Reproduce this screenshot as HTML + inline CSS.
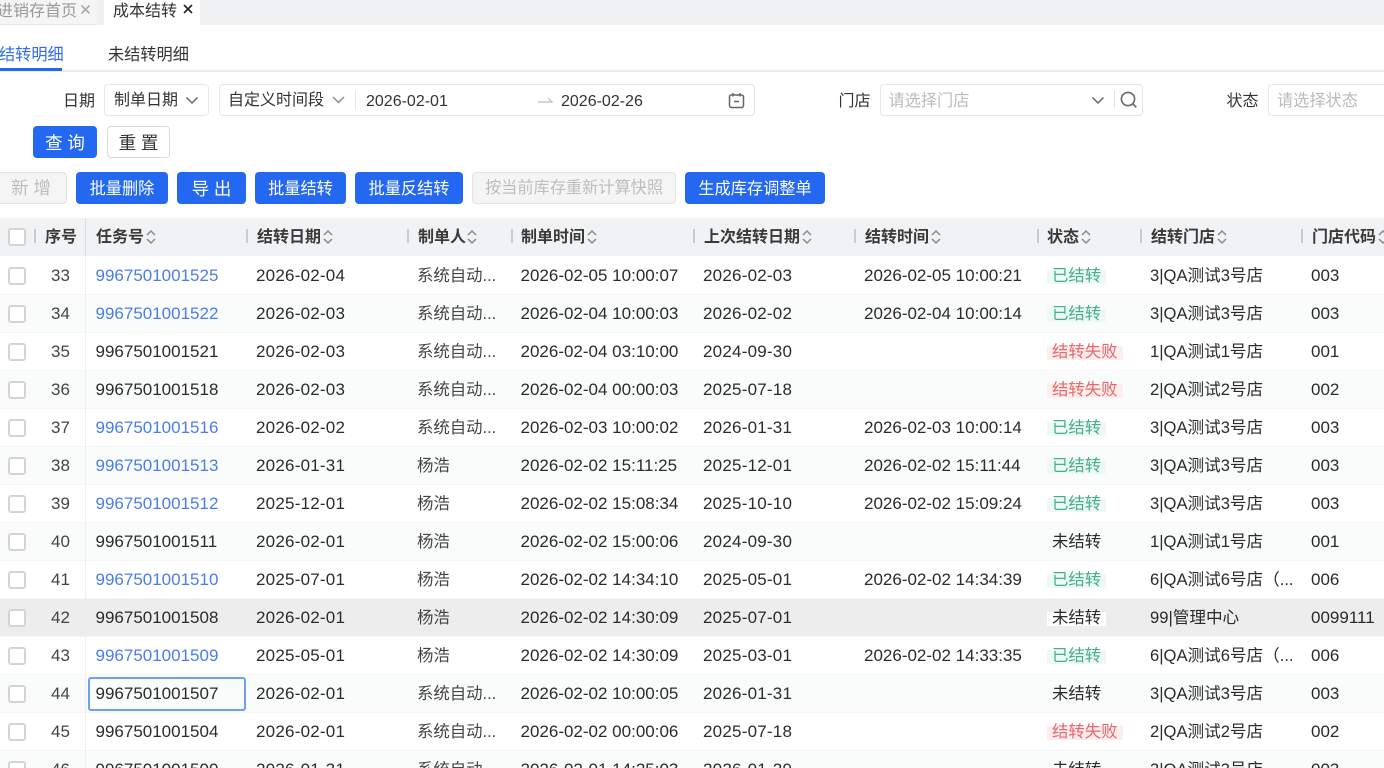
<!DOCTYPE html>
<html lang="zh"><head><meta charset="utf-8"><title>成本结转</title>
<style>
*{box-sizing:border-box}
html,body{margin:0;padding:0;width:1384px;height:768px;overflow:hidden;background:#fff}
body{position:relative;font-family:"Liberation Sans","Noto Sans CJK SC",sans-serif;color:#333;font-size:16px}
.a{position:absolute;white-space:nowrap}
.box{position:absolute;border:1.5px solid #e6e7e9;border-radius:4px;background:#fff;height:32px}
.t{position:absolute;white-space:nowrap;line-height:24px}
.btn{position:absolute;height:32px;border-radius:4px;background:#2468f2;color:#fff;text-align:center;line-height:34px;font-size:16.2px;white-space:nowrap}
.sp{font-size:17.5px}
.dis{background:#f5f5f5;border:1.5px solid #e4e4e4;color:#bdbdbd;line-height:31px}
.ph{color:#bbb}
.hd{position:absolute;left:0;top:218px;width:1384px;height:38px;background:#f1f2f4}
.hd b{position:absolute;top:8px;line-height:24px;font-weight:700;color:#3a3a3a;font-size:16px;white-space:nowrap}
.hd i{position:absolute;top:11px;width:1.5px;height:14px;background:#c9ccd1}
.hd svg{position:absolute;top:10px}
.r{position:absolute;left:0;width:1384px;height:38px;background:#fff;border-bottom:1px solid #f4f5f6}
.r.e{background:#fafbfb}
.r.h{background:#ededed}
.r>span{position:absolute;top:6px;line-height:25px;font-size:17px;white-space:nowrap;color:#2b2b2b}
.r>span:nth-child(1){left:7.5px;top:10px;width:18px;height:18px;border:2px solid #d4d4d4;border-radius:3px;background:#fff}
.r>span:nth-child(2){left:35.5px;width:50px;text-align:center;color:#444}
.r>span:nth-child(3){left:95.5px}
.r>span:nth-child(4){left:256px;letter-spacing:.22px}
.r>span:nth-child(5){left:417px;top:7px;color:#444;font-size:16.4px}
.r>span:nth-child(6){left:520.5px}
.r>span:nth-child(7){left:703px;letter-spacing:.22px}
.r>span:nth-child(8){left:864px}
.r>span:nth-child(9){left:1047px;top:7px;padding:0 5px;font-size:16.4px;background:linear-gradient(transparent 6px,var(--b,transparent) 6px,var(--b,transparent) 20px,transparent 20px)}
.r>span:nth-child(10){left:1150px;font-size:16.6px}
.r>span:nth-child(11){left:1311px}
.l{color:#4a7cf0 !important}
.g{color:#43b08a !important;--b:#eef9f5}
.f{color:#e8676a !important;--b:#fdeded}
.w{--b:#fff}
</style></head><body>

<div class="a" style="left:0;top:0;width:1384px;height:25px;background:#f0f1f3"></div>
<div class="a" style="left:0;top:0;width:97px;height:25px;background:#f5f5f5;border-bottom:1px solid #e8e8e8"></div>
<div class="a" style="left:104px;top:0;width:96px;height:25px;background:#fff"></div>
<div class="t" style="left:-3px;top:0;color:#9a9a9a;font-size:16px">进销存首页</div>
<svg class="a" style="left:80px;top:4px" width="11" height="11" viewBox="0 0 11 11"><path d="M1.5 1.5l8 8M9.5 1.5l-8 8" stroke="#aaa" stroke-width="1.6"/></svg>
<div class="t" style="left:113px;top:0;color:#333;font-size:16px">成本结转</div>
<svg class="a" style="left:183px;top:4px" width="10" height="10" viewBox="0 0 10 10"><path d="M1 1l8 8M9 1l-8 8" stroke="#222" stroke-width="1.6"/></svg>

<div class="t" style="left:-1px;top:43px;color:#2f6cf2;font-size:16.2px">结转明细</div>
<div class="t" style="left:108px;top:43px;color:#333;font-size:16.2px">未结转明细</div>
<div class="a" style="left:0;top:70px;width:1384px;height:1.5px;background:#ececec"></div>
<div class="a" style="left:0;top:68px;width:62px;height:2.5px;background:#2468f2"></div>

<div class="t" style="left:63px;top:90px">日期</div>
<div class="box" style="left:104px;top:84px;width:105px"></div>
<div class="t" style="left:114px;top:89px">制单日期</div>
<svg class="a" style="left:185px;top:96px" width="14" height="9" viewBox="0 0 14 9"><path d="M1.5 1.5L7 7l5.5-5.5" fill="none" stroke="#666" stroke-width="1.5"/></svg>
<div class="box" style="left:219px;top:84px;width:536px"></div>
<div class="t" style="left:228px;top:89px">自定义时间段</div>
<svg class="a" style="left:332px;top:96px" width="13" height="8" viewBox="0 0 13 8"><path d="M1 1l5.5 5.5L12 1" fill="none" stroke="#888" stroke-width="1.4"/></svg>
<div class="a" style="left:355px;top:91px;width:1px;height:18px;background:#e4e4e4"></div>
<div class="t" style="left:366px;top:90px;font-size:16px;color:#333">2026-02-01</div>
<svg class="a" style="left:538px;top:96px" width="16" height="10" viewBox="0 0 16 10"><path d="M0 6h14L10 2" fill="none" stroke="#bbb" stroke-width="1.2"/></svg>
<div class="t" style="left:561px;top:90px;font-size:16px;color:#333">2026-02-26</div>
<svg class="a" style="left:728px;top:92px" width="17" height="17" viewBox="0 0 17 17"><rect x="1.5" y="3" width="14" height="12.5" rx="2" fill="none" stroke="#666" stroke-width="1.5"/><path d="M5 1v3.5M12 1v3.5M6 9.5h5" stroke="#666" stroke-width="1.5" fill="none"/></svg>

<div class="t" style="left:838.5px;top:90px">门店</div>
<div class="box" style="left:879.5px;top:84px;width:263.5px"></div>
<div class="t ph" style="left:888.5px;top:89px;font-size:16.2px">请选择门店</div>
<svg class="a" style="left:1091px;top:96px" width="14" height="9" viewBox="0 0 14 9"><path d="M1.5 1.5L7 7l5.5-5.5" fill="none" stroke="#666" stroke-width="1.5"/></svg>
<div class="a" style="left:1114px;top:90px;width:1px;height:18px;background:#e2e2e2"></div>
<svg class="a" style="left:1119px;top:90px" width="19" height="19" viewBox="0 0 19 19"><circle cx="9" cy="9" r="6.6" fill="none" stroke="#666" stroke-width="1.6"/><path d="M13.8 13.8l3.5 3.5" stroke="#666" stroke-width="1.6"/></svg>

<div class="t" style="left:1226.5px;top:90px">状态</div>
<div class="box" style="left:1267.5px;top:84px;width:130px"></div>
<div class="t ph" style="left:1277px;top:89px;font-size:16.2px">请选择状态</div>

<div class="btn sp" style="left:33px;top:126px;width:64px">查 询</div>
<div class="btn sp" style="left:107px;top:126px;width:63px;background:#fff;border:1.5px solid #d9d9d9;color:#333;line-height:32px">重 置</div>

<div class="btn dis sp" style="left:-5px;top:172px;width:72px">新 增</div>
<div class="btn" style="left:76px;top:172px;width:92px">批量删除</div>
<div class="btn sp" style="left:177px;top:172px;width:69px">导 出</div>
<div class="btn" style="left:255px;top:172px;width:91px">批量结转</div>
<div class="btn" style="left:355px;top:172px;width:108px">批量反结转</div>
<div class="btn dis" style="left:472px;top:172px;width:204px">按当前库存重新计算快照</div>
<div class="btn" style="left:685px;top:172px;width:140px">生成库存调整单</div>

<div class="r" style="top:257px"><span></span><span>33</span><span class="l">9967501001525</span><span>2026-02-04</span><span>系统自动...</span><span>2026-02-05 10:00:07</span><span>2026-02-03</span><span>2026-02-05 10:00:21</span><span class="g">已结转</span><span>3|QA测试3号店</span><span>003</span></div>
<div class="r e" style="top:295px"><span></span><span>34</span><span class="l">9967501001522</span><span>2026-02-03</span><span>系统自动...</span><span>2026-02-04 10:00:03</span><span>2026-02-02</span><span>2026-02-04 10:00:14</span><span class="g">已结转</span><span>3|QA测试3号店</span><span>003</span></div>
<div class="r" style="top:333px"><span></span><span>35</span><span>9967501001521</span><span>2026-02-03</span><span>系统自动...</span><span>2026-02-04 03:10:00</span><span>2024-09-30</span><span></span><span class="f">结转失败</span><span>1|QA测试1号店</span><span>001</span></div>
<div class="r e" style="top:371px"><span></span><span>36</span><span>9967501001518</span><span>2026-02-03</span><span>系统自动...</span><span>2026-02-04 00:00:03</span><span>2025-07-18</span><span></span><span class="f">结转失败</span><span>2|QA测试2号店</span><span>002</span></div>
<div class="r" style="top:409px"><span></span><span>37</span><span class="l">9967501001516</span><span>2026-02-02</span><span>系统自动...</span><span>2026-02-03 10:00:02</span><span>2026-01-31</span><span>2026-02-03 10:00:14</span><span class="g">已结转</span><span>3|QA测试3号店</span><span>003</span></div>
<div class="r e" style="top:447px"><span></span><span>38</span><span class="l">9967501001513</span><span>2026-01-31</span><span>杨浩</span><span>2026-02-02 15:11:25</span><span>2025-12-01</span><span>2026-02-02 15:11:44</span><span class="g">已结转</span><span>3|QA测试3号店</span><span>003</span></div>
<div class="r" style="top:485px"><span></span><span>39</span><span class="l">9967501001512</span><span>2025-12-01</span><span>杨浩</span><span>2026-02-02 15:08:34</span><span>2025-10-10</span><span>2026-02-02 15:09:24</span><span class="g">已结转</span><span>3|QA测试3号店</span><span>003</span></div>
<div class="r e" style="top:523px"><span></span><span>40</span><span>9967501001511</span><span>2026-02-01</span><span>杨浩</span><span>2026-02-02 15:00:06</span><span>2024-09-30</span><span></span><span>未结转</span><span>1|QA测试1号店</span><span>001</span></div>
<div class="r" style="top:561px"><span></span><span>41</span><span class="l">9967501001510</span><span>2025-07-01</span><span>杨浩</span><span>2026-02-02 14:34:10</span><span>2025-05-01</span><span>2026-02-02 14:34:39</span><span class="g">已结转</span><span>6|QA测试6号店（...</span><span>006</span></div>
<div class="r h" style="top:599px"><span></span><span>42</span><span>9967501001508</span><span>2026-02-01</span><span>杨浩</span><span>2026-02-02 14:30:09</span><span>2025-07-01</span><span></span><span class="w">未结转</span><span>99|管理中心</span><span>0099111</span></div>
<div class="r" style="top:637px"><span></span><span>43</span><span class="l">9967501001509</span><span>2025-05-01</span><span>杨浩</span><span>2026-02-02 14:30:09</span><span>2025-03-01</span><span>2026-02-02 14:33:35</span><span class="g">已结转</span><span>6|QA测试6号店（...</span><span>006</span></div>
<div class="r e" style="top:675px"><span></span><span>44</span><span>9967501001507</span><span>2026-02-01</span><span>系统自动...</span><span>2026-02-02 10:00:05</span><span>2026-01-31</span><span></span><span>未结转</span><span>3|QA测试3号店</span><span>003</span></div>
<div class="r" style="top:713px"><span></span><span>45</span><span>9967501001504</span><span>2026-02-01</span><span>系统自动...</span><span>2026-02-02 00:00:06</span><span>2025-07-18</span><span></span><span class="f">结转失败</span><span>2|QA测试2号店</span><span>002</span></div>
<div class="r e" style="top:751px"><span></span><span>46</span><span>9967501001500</span><span>2026-01-31</span><span>系统自动...</span><span>2026-02-01 14:25:03</span><span>2026-01-29</span><span></span><span>未结转</span><span>3|QA测试3号店</span><span>003</span></div>

<div class="a" style="left:85px;top:218px;width:1px;height:550px;background:#eeeff0"></div>
<div class="a" style="left:88px;top:677px;width:158px;height:34px;border:2px solid #6c9ff5;border-radius:3px"></div>

<div class="hd">
<span class="a" style="left:7.5px;top:10px;width:18px;height:18px;border:2px solid #d4d4d4;border-radius:3px;background:#fff"></span>
<i style="left:34px"></i><b style="left:45px">序号</b>
<i style="left:85px;top:0;height:38px;width:1px;background:#d9dbde"></i>
<b style="left:96px">任务号</b><svg style="left:145px" width="12" height="18" viewBox="0 0 12 18"><use href="#s"/></svg>
<i style="left:246px"></i><b style="left:257px">结转日期</b><svg style="left:322px" width="12" height="18" viewBox="0 0 12 18"><use href="#s"/></svg>
<i style="left:407px"></i><b style="left:418px">制单人</b><svg style="left:466px" width="12" height="18" viewBox="0 0 12 18"><use href="#s"/></svg>
<i style="left:511px"></i><b style="left:521px">制单时间</b><svg style="left:586px" width="12" height="18" viewBox="0 0 12 18"><use href="#s"/></svg>
<i style="left:693px"></i><b style="left:704px">上次结转日期</b><svg style="left:801px" width="12" height="18" viewBox="0 0 12 18"><use href="#s"/></svg>
<i style="left:854px"></i><b style="left:865px">结转时间</b><svg style="left:930px" width="12" height="18" viewBox="0 0 12 18"><use href="#s"/></svg>
<i style="left:1037px"></i><b style="left:1047px">状态</b><svg style="left:1080px" width="12" height="18" viewBox="0 0 12 18"><use href="#s"/></svg>
<i style="left:1140px"></i><b style="left:1151px">结转门店</b><svg style="left:1216px" width="12" height="18" viewBox="0 0 12 18"><use href="#s"/></svg>
<i style="left:1301px"></i><b style="left:1312px">门店代码</b><svg style="left:1377px" width="12" height="18" viewBox="0 0 12 18"><use href="#s"/></svg>
</div>
<svg width="0" height="0" style="position:absolute"><defs><path id="s" d="M2 7l4-4 4 4M2 11l4 4 4-4" fill="none" stroke="#8a8a8a" stroke-width="1.5"/></defs></svg>
</body></html>
